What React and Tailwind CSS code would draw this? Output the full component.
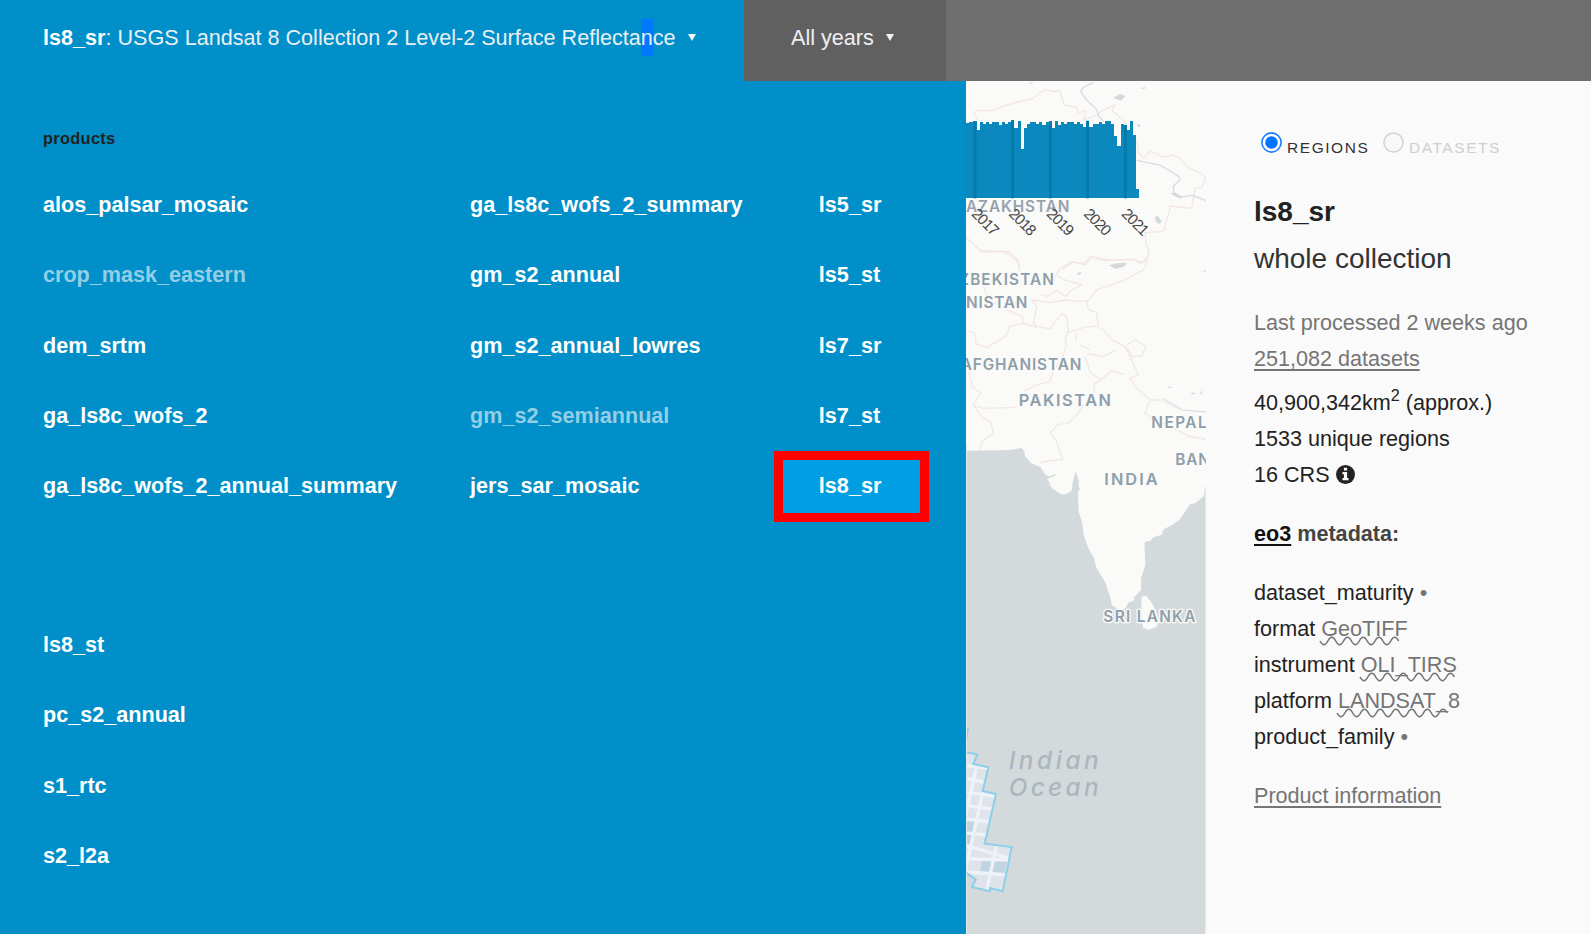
import React from "react";

const columns = [
  ["alos_palsar_mosaic", "crop_mask_eastern", "dem_srtm", "ga_ls8c_wofs_2", "ga_ls8c_wofs_2_annual_summary"],
  ["ga_ls8c_wofs_2_summary", "gm_s2_annual", "gm_s2_annual_lowres", "gm_s2_semiannual", "jers_sar_mosaic"],
  ["ls5_sr", "ls5_st", "ls7_sr", "ls7_st", "ls8_sr"],
];
const overflow = ["ls8_st", "pc_s2_annual", "s1_rtc", "s2_l2a"];
const dimmed = ["crop_mask_eastern", "gm_s2_semiannual"];
const widths = ["w-[447px]", "w-[365px]", "w-[154px]"];

// [start x, top y] of each step in the monthly histogram
const steps = [
  [48, 160], [57, 156], [70, 152], [80, 180], [90, 157], [99, 161], [109, 157], [118, 161], [127, 157],
  [146, 165], [156, 157], [165, 161], [174, 156], [184, 151], [193, 175], [203, 152], [212, 236], [222, 175],
  [231, 161], [240, 157], [259, 161], [268, 157], [277, 165], [287, 157], [296, 152], [305, 175], [315, 152],
  [325, 165], [334, 157], [343, 161], [352, 157], [371, 161], [381, 157], [390, 161], [399, 170], [409, 152],
  [418, 170], [428, 161], [446, 157], [456, 161], [465, 152], [484, 161], [493, 198], [502, 227], [512, 161],
  [521, 166], [530, 180], [540, 152], [549, 194], [558, 358],
];
const histogram = "M48 385" + steps.map(([x, y]) => `H${x}V${y}`).join("") + "H568V385Z";
const years = [["2017", 62], ["2018", 174], ["2019", 287], ["2020", 399], ["2021", 512]];

function Caret() {
  return (
    <svg className="ml-3 inline-block h-[7px] w-2 align-[4px]" viewBox="0 0 8 7">
      <path d="M0 0H8L4 7Z" fill="#f4f4f4" />
    </svg>
  );
}

function Product({ name }) {
  if (name === "ls8_sr")
    return (
      <li className="-ml-[45px] flex h-[71px] w-[155px] items-center border-[9px] border-[#ff0000] bg-[#009fe3] pl-[36px] text-white">
        {name}
      </li>
    );
  return (
    <li className={"flex h-[70.3px] items-center " + (dimmed.includes(name) ? "text-[#93cee6]" : "text-white")}>{name}</li>
  );
}

function Label({ x, y, w, size = 46, children }) {
  return (
    <text x={x} y={y} fontSize={size} textLength={w} fontWeight="600" fill="#8e9eaa" stroke="#fafaf8" strokeWidth="8" strokeLinejoin="round" paintOrder="stroke">
      {children}
    </text>
  );
}

function MapView() {
  return (
    <svg className="block h-[853px] w-[240px] bg-[#fafaf8] font-['Inter',sans-serif]" viewBox="0 0 240 853">
      <g transform="translate(-16 399) scale(.33333)">
        <path fill="#d4dadc" d="M48 -88L150 -89L180 -90L215 -96L223 -86L225 -72L244 -50L272 -38L285 -17L298 -10L322 -20L310 -10L292 -4L306 22L284 0L305 24L335 44L350 41L365 32L373 15L370 0L377 -27L386 0L384 45L386 95L397 130L401 165L415 205L432 235L440 265L465 305L480 350L486 375L512 392L526 385L535 368L553 360L551 353L573 330L573 295L586 255L583 190L590 183L600 184L610 172L636 164L641 148L667 135L690 118L720 72L735 70L762 48L764 25L772 20V1365H48Z" />
        <path fill="#fafaf8" d="M575 349L588 348L603 365L618 392L628 425L617 442L596 449L580 444L575 420L574 380Z" />
      </g>

      <g transform="translate(-16 169) scale(.33333)" fill="none" stroke="#f4e6e7" strokeWidth="4" strokeLinejoin="round">
        <path d="M88 2L160 4L187 20L207 40L208 62" />
        <path d="M310 90L330 55L365 35L405 45L425 20L480 30L550 28L580 38L598 12L594 0M583 58L520 92L480 105L440 120L415 152L385 154L345 150L300 158L245 150L260 170L250 218L262 230L300 236L335 190L350 200L355 248L400 232L440 228L460 240L485 268L525 290L545 330L565 375L540 385L560 415L600 450L635 450L690 480M272 132L290 140L320 122L350 140L358 125L395 104L345 90L325 80M410 155L415 178L440 188L444 225" />
        <path d="M48 242L75 250L78 282L110 293L168 258L180 228L220 220L262 232M100 110L118 150L180 184L218 200L220 220M355 245L345 265L350 285L338 320L310 362L300 395L260 405L220 424M55 350L68 412L92 430L68 466L100 475L195 472M70 466L100 505L122 515L130 550L95 575L90 602M400 465L385 490L355 520L322 524L300 550L318 570L338 628L275 636L268 642" />
        <path d="M410 310L460 320L500 300M405 320L422 370L455 388L432 402L434 430M455 388L485 362L525 374M530 285L555 270L588 288L575 318L545 320L530 290M600 450L584 490L620 510L690 545L720 560L770 568M380 250L378 272M392 285L420 300" />
      </g>
      <g transform="translate(-16 169) scale(.33333)" fill="#d4dadc">
        <path d="M478 46L500 40L532 38L522 50L498 56ZM380 72L390 65L395 70L386 75ZM368 695L384 692L386 712L392 720H366ZM757 66L765 60L770 64ZM655 410H664V414H655ZM720 432L734 426V434ZM748 432L758 420L755 432Z" />
        <path d="M640 446L698 480L768 486" fill="none" stroke="#d4dadc" strokeWidth="3" />
      </g>

      <g transform="translate(-16 -11) scale(.33333)" fill="none" strokeLinejoin="round">
        <g stroke="#f4e6e7" strokeWidth="4">
          <path d="M82 150L72 135L78 122L125 122L180 102L250 85L285 58L310 65L330 63L342 105L380 112L385 128L408 122L402 150L440 135L460 120L495 104L485 120L525 155L545 190L565 225L562 245L582 265L600 242L640 262L668 255L690 265L710 290L755 312L768 325L755 352L735 355L725 415L662 408L640 484L585 488L588 520L597 545L585 592M48 502L95 546L175 544L203 570L210 602" />
          <path d="M335 598L370 576L402 580L422 560L460 572L550 568L575 580" />
        </g>
        <path d="M430 38L400 52L392 65L410 90L440 118L446 138L465 158M560 271L632 286L685 318L690 330L670 348L672 368L690 382L728 376L768 392" stroke="#d6dde0" strokeWidth="4" />
        <path d="M490 84L510 72L526 78L514 92ZM660 370L675 368L698 380L690 386ZM614 440L624 438L635 455L628 462L618 455ZM478 586L530 578L518 590L495 596ZM572 56L584 50L586 56ZM238 38H248V42H240ZM562 162L571 164L570 172L562 170Z" fill="#d4dadc" />
      </g>

      <g transform="translate(-16 -11) scale(.33333)">
        <text x="48" y="425" fontSize="46" textLength="310" fontWeight="600" fill="#94a3af">AZAKHSTAN</text>
        <path d={histogram} fill="#0b88bd" stroke="#ffffff" strokeWidth="2" paintOrder="stroke" shapeRendering="crispEdges" />
        <g fill="#0779a8">
          <rect x="71" y="156" width="8" height="229" />
          <rect x="184" y="152" width="8" height="233" />
          <rect x="297" y="156" width="8" height="229" />
          <rect x="409" y="152" width="8" height="233" />
          <rect x="522" y="166" width="8" height="219" />
        </g>
        <g className="font-['Liberation_Sans',sans-serif]" fill="#444" fontSize="46">
          {years.map(([label, x]) => (
            <text key={label} transform={`translate(${x} 434) rotate(45)`} textLength="94">{label}</text>
          ))}
        </g>
      </g>

      <g transform="translate(-16 169) scale(.33333)">
        <Label x={27} y={104} w={285}>ZBEKISTAN</Label>
        <Label x={48} y={174} w={184}>NISTAN</Label>
        <Label x={32} y={359} w={362}>AFGHANISTAN</Label>
        <Label x={206} y={469} w={277} size={49}>PAKISTAN</Label>
        <Label x={604} y={533} w={166}>NEPAL</Label>
        <Label x={676} y={644} w={104}>BAN</Label>
        <Label x={463} y={704} w={160} size={49}>INDIA</Label>
      </g>
      <g transform="translate(-16 399) scale(.33333)">
        <Label x={460} y={426} w={276}>SRI LANKA</Label>
      </g>

      <g transform="translate(-16 609) scale(.33333)">
        <g fontSize="73" fontStyle="italic" fontWeight="500" fill="#abb6be">
          <text x="176" y="236" textLength="270">Indian</text>
          <text x="176" y="317" textLength="270">Ocean</text>
        </g>
        <clipPath id="coverage">
          <path d="M48 186L82 194L70 222L115 232L98 303L138 312L104 461L185 471L158 604L120 594L119 604L66 591L77 568L48 548Z" />
        </clipPath>
        <g clipPath="url(#coverage)">
          <rect x="40" y="180" width="160" height="440" fill="#dfe4eb" />
          <path d="M48 388L76 392L64 465H48ZM98 505L172 512L164 550L90 544Z" fill="#c0d5e0" />
          <path d="M40 225L120 234M40 264L120 280M40 306L140 320M40 346L140 358M40 386L140 397M40 428L140 438M40 464L190 508M40 506L190 510M40 545L190 556M88 190L40 410M100 300L44 550M140 465L108 610" fill="none" stroke="#eff2f8" strokeWidth="10" />
        </g>
        <path d="M48 186L82 194L70 222L115 232L98 303L138 312L104 461L185 471L158 604L120 594L119 604L66 591L77 568L48 548M54 112L48 152" fill="none" stroke="#8ccfea" strokeWidth="6" />
      </g>
      <path d="M.5 363V853M239.5 405V853" stroke="#e6eaeb" />
    </svg>
  );
}

function Wavy({ children, waves }) {
  const d = "M0 5C2 8 4 8.500 6 6.500" + "S9.500 1.500 12 1.500S15.500 8.500 19.800 6.500".slice(0, 0);
  let path = "M0 4";
  for (let i = 0; i < waves; i++) path += " q3.930 7.500 7.860 0 q3.930 -7.500 7.860 0";
  return (
    <span className="relative text-[#757575]">
      {children}
      <svg className="absolute -left-px top-[21px] h-[10px] overflow-visible" width={waves * 15.72} viewBox={`0 0 ${waves * 15.72} 10`}>
        <path d={path} fill="none" stroke="#757575" strokeWidth="1.5" />
      </svg>
    </span>
  );
}

function Sidebar() {
  return (
    <aside className="flex-1 bg-[#fafafa] pl-12 text-[21.6px] leading-[35.9px] text-[#222]">
      <div className="flex pt-[51px] pl-[7px] text-[15.5px] leading-[21px] tracking-[1.55px] text-[#333]">
        <label className="flex">
          <svg className="mr-[5px] size-[21px]" viewBox="0 0 21 21">
            <circle cx="10.500" cy="10.500" r="9.600" fill="#fff" stroke="#1a7dff" strokeWidth="1.600" />
            <circle cx="10.500" cy="10.500" r="6.200" fill="#0075ff" />
          </svg>
          <span className="w-[96px] pt-[5px]">REGIONS</span>
        </label>
        <label className="flex text-[#cfcfcf]">
          <svg className="mr-[5px] size-[21px]" viewBox="0 0 21 21">
            <circle cx="10.500" cy="10.500" r="9.600" fill="#f8f8f8" stroke="#d2d2d2" strokeWidth="1.500" />
          </svg>
          <span className="pt-[5px]">DATASETS</span>
        </label>
      </div>
      <h1 className="mt-[30px] text-[28px] leading-[47px] font-bold">ls8_sr</h1>
      <h2 className="text-[28px] leading-[47px] text-[#333]">whole collection</h2>
      <p className="mt-[23px] text-[#757575]">
        Last processed 2 weeks ago
        <br />
        <a className="underline decoration-[1.500px] underline-offset-[3px]">251,082 datasets</a>
      </p>
      <p className="mt-2">
        40,900,342km<span className="relative -top-[9px] text-[16.2px] leading-none">2</span> (approx.)
        <br />
        1533 unique regions
        <br />
        16 CRS{" "}
        <svg className="inline-block size-[19px] align-[-2px]" viewBox="0 0 19 19">
          <circle cx="9.500" cy="9.500" r="9.500" fill="#222" />
          <path d="M7.900 2.700H11.100V5.500H7.900ZM6.500 7H11.100V13H12.500V15.300H6.500V13H7.900V9.300H6.500Z" fill="#fafafa" />
        </svg>
      </p>
      <h3 className="mt-[23px] font-bold text-[#444]">
        <a className="text-[#111] underline decoration-[1.500px] underline-offset-[3px]">eo3</a> metadata:
      </h3>
      <ul className="mt-[24px]">
        <li>dataset_maturity <span className="text-[#757575]">•</span></li>
        <li>format <Wavy waves={5}>GeoTIFF</Wavy></li>
        <li>instrument <Wavy waves={6}>OLI_TIRS</Wavy></li>
        <li>platform <Wavy waves={7}>LANDSAT_8</Wavy></li>
        <li>product_family <span className="text-[#757575]">•</span></li>
      </ul>
      <p className="mt-[23px] text-[#757575]">
        <a className="underline decoration-[1.500px] underline-offset-[3px]">Product information</a>
      </p>
    </aside>
  );
}

export default function App() {
  return (
    <div className="flex h-[934px] w-[1591px] flex-col overflow-hidden font-['Liberation_Sans',Arial,sans-serif]">
      <header className="flex h-[81px] bg-[#6e6e6e] text-[21.6px] leading-[37px] text-[#e8f0f4]">
        <div className="w-[744px] bg-[#008fc8] pt-[19px] pl-[43px] whitespace-nowrap">
          <b className="text-white">ls8_sr</b>: USGS Landsat 8 Collection 2 Level-2 Surface Reflecta
          <span className="bg-[#0078ff] py-[6px]">n</span>ce<Caret />
        </div>
        <div className="w-[202px] bg-[#606060] pt-[19px] pl-[47px] whitespace-nowrap text-[#f0f0f0]">
          All years<Caret />
        </div>
      </header>
      <main className="flex h-[853px]">
        <nav className="w-[966px] bg-[#008fc8] pl-[43px] text-[21.6px] font-bold">
          <h4 className="h-[89px] pt-[45px] text-[16.4px] leading-6 tracking-[.3px] text-[#222]">products</h4>
          <div className="flex h-[440px]">
            {columns.map((names, i) => (
              <ul key={names[0]} className={widths[i]}>
                {names.map((name) => <Product key={name} name={name} />)}
              </ul>
            ))}
          </div>
          <ul>
            {overflow.map((name) => <Product key={name} name={name} />)}
          </ul>
        </nav>
        <MapView />
        <Sidebar />
      </main>
    </div>
  );
}
